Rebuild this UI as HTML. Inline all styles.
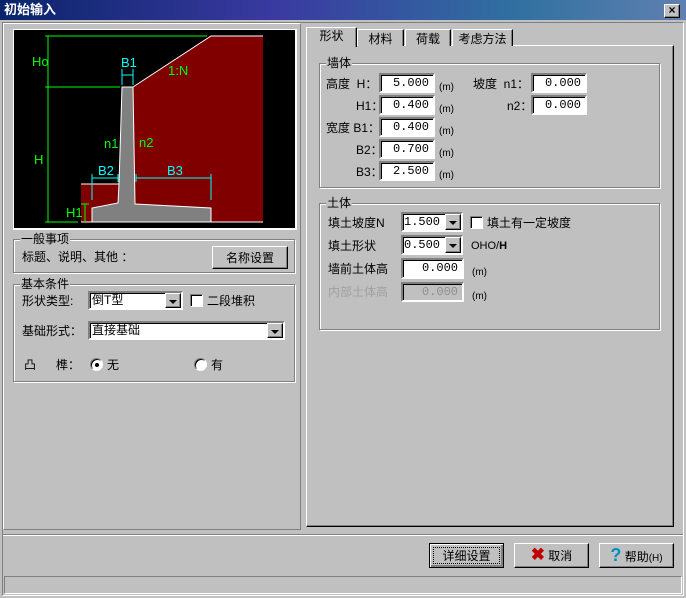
<!DOCTYPE html>
<html><head><meta charset="utf-8"><style>
*{margin:0;padding:0;box-sizing:border-box}
body{width:686px;height:598px;background:#c0c0c0;position:relative;overflow:hidden;font-family:"Liberation Sans","Noto Sans CJK SC",sans-serif;font-size:12px;color:#000}
.a{position:absolute}
.t{position:absolute;white-space:nowrap;line-height:14px}
.in{position:absolute;background:#fff;border:2px solid;border-color:#808080 #fff #fff #808080;box-shadow:inset 1px 1px 0 #000;text-align:right;padding-right:4px;font-family:"Liberation Mono",monospace;font-size:12px;line-height:17px}
.grp{position:absolute;border:1px solid #808080;box-shadow:1px 1px 0 #fff, inset 1px 1px 0 #fff}
.gl{position:absolute;top:-8px;left:6px;background:#c0c0c0;padding:0 1px;line-height:14px}
.btn{position:absolute;background:#c0c0c0;border:1px solid;border-color:#fff #000 #000 #fff;box-shadow:inset -1px -1px 0 #808080;text-align:center;line-height:22px}
.cb{position:absolute;width:13px;height:13px;background:#fff;border:1px solid;border-color:#808080 #fff #fff #808080;box-shadow:inset 1px 1px 0 #000}
.dd{position:absolute;right:0;top:0;width:16px;height:100%;background:#c0c0c0;border:1px solid;border-color:#fff #000 #000 #fff;box-shadow:inset -1px -1px 0 #808080}
.dd:after{content:"";position:absolute;left:3px;top:6px;border:4px solid transparent;border-top:4px solid #000;border-bottom:0}
.tab{position:absolute;border:1px solid;border-color:#fff #000 transparent #fff;border-bottom:none;box-shadow:inset -1px 0 0 #808080;text-align:center;line-height:19px;background:#c0c0c0}
</style></head><body>
<div class="a" style="left:0;top:0;width:686px;height:20px;background:linear-gradient(90deg,#0a246a,#3a3aa0 40%,#3070a0 75%,#6080b0)"></div>
<div class="t" style="left:4px;top:3px;color:#fff;font-weight:bold;font-size:13px">初始输入</div>
<div class="btn" style="left:664px;top:4px;width:16px;height:14px;line-height:11px;font-size:12px;font-weight:bold">×</div>
<div class="a" style="left:2px;top:22px;width:682px;height:574px;border:1px solid;border-color:#808080 #fff #fff #808080"></div>
<div class="a" style="left:3px;top:23px;width:298px;height:507px;border:1px solid;border-color:#fff #808080 #808080 #fff"></div>

<svg class="a" style="left:12px;top:28px" width="286" height="203" viewBox="12 28 286 203">
<rect x="12" y="28" width="286" height="203" fill="#c0c0c0"/>
<rect x="13" y="29" width="284" height="201" fill="#fff"/>
<rect x="14" y="30" width="281" height="198" fill="#000"/>
<polygon points="133,87 211,36 263,36 263,222 211,222 211,208 135,204" fill="#800000"/>
<polygon points="81,184 119,184 118,203 92,208 92,222 81,222" fill="#800000"/>
<polygon points="92,222 92,208 118,203 119,184 122,87 133,87 135,204 211,208 211,222" fill="#808080" stroke="#fff" stroke-width="1"/>
<polyline points="133,87 211,36 263,36" fill="none" stroke="#fff"/>
<line x1="81" y1="184" x2="119" y2="184" stroke="#fff"/>
<line x1="81" y1="222" x2="263" y2="222" stroke="#fff"/>
<g stroke="#0f0" fill="none"><line x1="48" y1="36" x2="48" y2="222"/><line x1="45" y1="36" x2="207" y2="36"/><line x1="45" y1="87" x2="120" y2="87"/><line x1="45" y1="222" x2="78" y2="222"/><line x1="85" y1="204" x2="85" y2="222"/><line x1="81" y1="204" x2="89" y2="204"/></g>
<g stroke="#0ff" fill="none"><line x1="122" y1="69" x2="122" y2="85"/><line x1="133" y1="69" x2="133" y2="85"/><line x1="122" y1="75" x2="133" y2="75"/>
<line x1="92" y1="174" x2="92" y2="200"/><line x1="118" y1="174" x2="118" y2="182"/><line x1="92" y1="178" x2="118" y2="178"/>
<line x1="136" y1="174" x2="136" y2="182"/><line x1="211" y1="174" x2="211" y2="200"/><line x1="136" y1="178" x2="211" y2="178"/></g>
<g font-family="Liberation Sans,sans-serif" font-size="13">
<text x="32" y="66" fill="#0f0">Ho</text><text x="34" y="164" fill="#0f0">H</text><text x="66" y="217" fill="#0f0">H1</text>
<text x="104" y="148" fill="#0f0">n1</text><text x="139" y="147" fill="#0f0">n2</text><text x="168" y="75" fill="#0f0">1:N</text>
<text x="121" y="67" fill="#0ff">B1</text><text x="98" y="175" fill="#0ff">B2</text><text x="167" y="175" fill="#0ff">B3</text></g>
</svg>

<div class="grp" style="left:13px;top:239px;width:282px;height:34px"><span class="gl">一般事项</span></div>
<div class="t" style="left:22px;top:250px">标题、说明、其他 ：</div>
<div class="btn" style="left:212px;top:246px;width:76px;height:23px">名称设置</div>

<div class="grp" style="left:13px;top:284px;width:282px;height:98px"><span class="gl">基本条件</span></div>
<div class="t" style="left:22px;top:294px">形状类型:</div>
<div class="in" style="left:88px;top:291px;width:95px;height:19px;line-height:15px;text-align:left;padding-left:2px;font-family:'Liberation Sans','Noto Sans CJK SC',sans-serif">倒T型<span class="dd"></span></div>
<div class="cb" style="left:190px;top:294px"></div><div class="t" style="left:207px;top:294px">二段堆积</div>
<div class="t" style="left:22px;top:324px">基础形式：</div>
<div class="in" style="left:88px;top:321px;width:197px;height:19px;line-height:15px;text-align:left;padding-left:2px;font-family:'Liberation Sans','Noto Sans CJK SC',sans-serif">直接基础<span class="dd"></span></div>
<div class="t" style="left:24px;top:358px">凸&nbsp;&nbsp;&nbsp;&nbsp;&nbsp;&nbsp;榫：</div>
<div class="cb" style="left:90px;top:358px;border-radius:50%"><div class="a" style="left:4px;top:4px;width:4px;height:4px;background:#000;border-radius:50%"></div></div>
<div class="t" style="left:107px;top:358px">无</div>
<div class="cb" style="left:194px;top:358px;border-radius:50%"></div>
<div class="t" style="left:211px;top:358px">有</div>

<div class="a" style="left:306px;top:45px;width:368px;height:482px;border:1px solid;border-color:#fff #000 #000 #fff;box-shadow:inset -1px -1px 0 #808080"></div>
<div class="tab" style="left:357px;top:29px;width:47px;height:17px">材料</div>
<div class="tab" style="left:405px;top:29px;width:46px;height:17px">荷载</div>
<div class="tab" style="left:452px;top:29px;width:61px;height:17px">考虑方法</div>
<div class="tab" style="left:306px;top:27px;width:51px;height:20px;line-height:17px;border-bottom:none">形状</div>

<div class="grp" style="left:319px;top:63px;width:341px;height:125px"><span class="gl">墙体</span></div>
<div class="t" style="left:326px;top:77px">高度&nbsp;&nbsp;H：</div>
<div class="t" style="left:356px;top:99px">H1：</div>
<div class="t" style="left:326px;top:121px">宽度 B1：</div>
<div class="t" style="left:356px;top:143px">B2：</div>
<div class="t" style="left:356px;top:165px">B3：</div>
<div class="in" style="left:379px;top:73px;width:56px;height:20px">5.000</div>
<div class="in" style="left:379px;top:95px;width:56px;height:20px">0.400</div>
<div class="in" style="left:379px;top:117px;width:56px;height:20px">0.400</div>
<div class="in" style="left:379px;top:139px;width:56px;height:20px">0.700</div>
<div class="in" style="left:379px;top:161px;width:56px;height:20px">2.500</div>
<div class="t" style="left:439px;top:81px;font-size:10px">(m)</div>
<div class="t" style="left:439px;top:103px;font-size:10px">(m)</div>
<div class="t" style="left:439px;top:125px;font-size:10px">(m)</div>
<div class="t" style="left:439px;top:147px;font-size:10px">(m)</div>
<div class="t" style="left:439px;top:169px;font-size:10px">(m)</div>
<div class="t" style="left:473px;top:77px">坡度&nbsp;&nbsp;n1：</div>
<div class="t" style="left:507px;top:99px">n2：</div>
<div class="in" style="left:531px;top:73px;width:56px;height:20px">0.000</div>
<div class="in" style="left:531px;top:95px;width:56px;height:20px">0.000</div>

<div class="grp" style="left:319px;top:203px;width:341px;height:127px"><span class="gl">土体</span></div>
<div class="t" style="left:328px;top:216px">填土坡度N</div>
<div class="in" style="left:401px;top:212px;width:62px;height:20px;text-align:left;padding-left:1px;line-height:16px">1.500<span class="dd"></span></div>
<div class="cb" style="left:470px;top:216px"></div><div class="t" style="left:487px;top:216px">填土有一定坡度</div>
<div class="t" style="left:328px;top:239px">填土形状</div>
<div class="in" style="left:401px;top:235px;width:62px;height:20px;text-align:left;padding-left:1px;line-height:16px">0.500<span class="dd"></span></div>
<div class="t" style="left:471px;top:239px;font-size:11px">OHO/<b>H</b></div>
<div class="t" style="left:328px;top:262px">墙前土体高</div>
<div class="in" style="left:401px;top:258px;width:63px;height:21px">0.000</div>
<div class="t" style="left:472px;top:266px;font-size:10px">(m)</div>
<div class="t" style="left:328px;top:285px;color:#a0a0a0">内部土体高</div>
<div class="in" style="left:401px;top:282px;width:63px;height:20px;background:#c0c0c0;color:#909090">0.000</div>
<div class="t" style="left:472px;top:290px;font-size:10px">(m)</div>

<div class="a" style="left:3px;top:534px;width:680px;height:2px;border-top:1px solid #808080;border-bottom:1px solid #fff"></div>
<div class="btn" style="left:429px;top:543px;width:75px;height:25px;border:1px solid #000;box-shadow:inset 1px 1px 0 #fff,inset -2px -2px 0 #808080"><div class="a" style="left:3px;top:3px;right:3px;bottom:3px;border:1px dotted #000;line-height:16px">详细设置</div></div>
<div class="btn" style="left:514px;top:543px;width:75px;height:25px"><span style="color:#c00000;font-weight:bold;font-size:17px">✖</span> 取消</div>
<div class="btn" style="left:599px;top:543px;width:75px;height:25px"><span style="color:#0090c0;font-weight:bold;font-size:18px">?</span> 帮助<span style="font-size:10px">(H)</span></div>
<div class="a" style="left:4px;top:576px;width:678px;height:18px;border:1px solid;border-color:#808080 #fff #fff #808080"></div>
</body></html>
